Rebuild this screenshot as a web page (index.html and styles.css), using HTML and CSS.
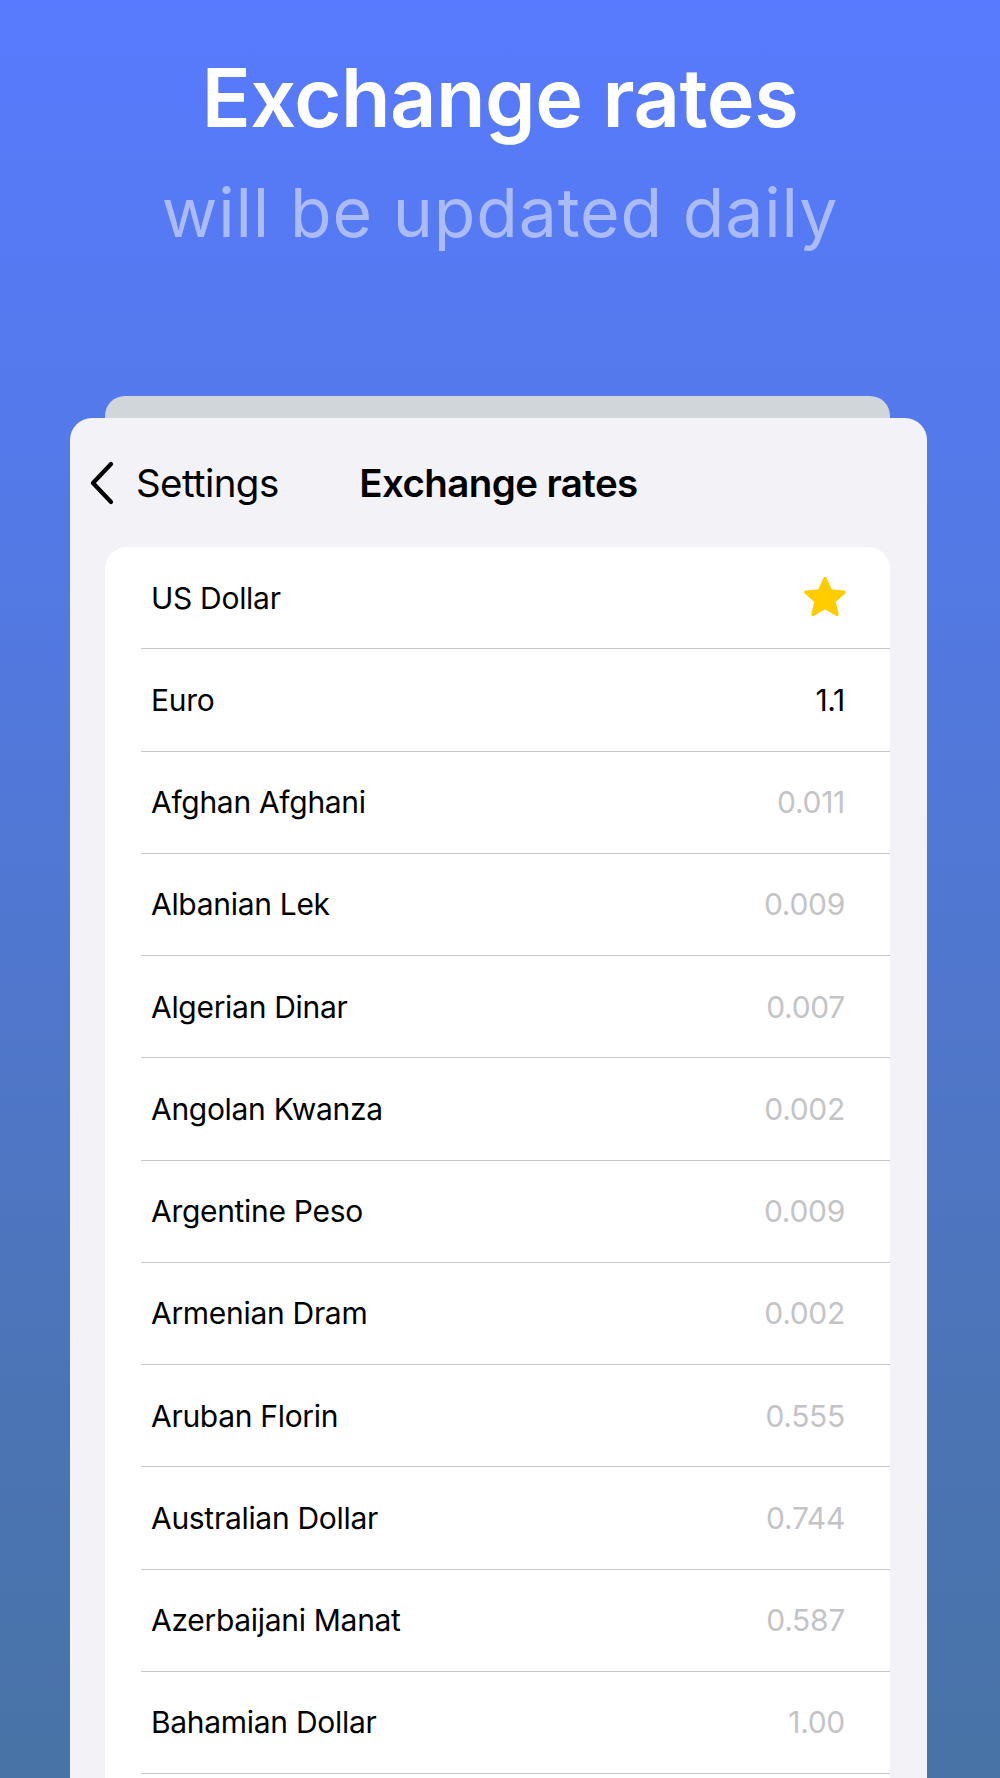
FILE: index.html
```html
<!DOCTYPE html>
<html lang="en">

<head>
  <meta charset="UTF-8">
  <meta name="viewport" content="width=device-width, initial-scale=1.0">
  <title>Exchange rates</title>
  <link rel="stylesheet" href="styles.css">
</head>

<body>
  <header class="hero">
    <h1 class="hero-title">Exchange rates</h1>
    <p class="hero-sub">will be updated daily</p>
  </header>

  <div class="back-card"></div>
  <main class="card">
    <nav class="nav">
      <a class="nav-back">
        <svg class="chevron" viewBox="0 0 26 44" width="26" height="44">
          <path d="M22 3 L4 22 L22 41" fill="none" stroke="#000" stroke-width="4.2" stroke-linecap="round" stroke-linejoin="round" />
        </svg>
        <span>Settings</span>
      </a>
      <span class="nav-title">Exchange rates</span>
      <span></span>
    </nav>

    <ul class="list">
      <li class="row">
        <span class="name">US Dollar</span>
        <svg class="star" viewBox="0 0 24 24" width="50" height="50">
          <path d="M12 2.6 L14.7 8.6 L21.2 9.2 L16.3 13.5 L17.8 19.9 L12 16.5 L6.2 19.9 L7.7 13.5 L2.8 9.2 L9.3 8.6 Z" fill="#ffcc00" stroke="#ffcc00" stroke-width="1.6" stroke-linejoin="round" />
        </svg>
      </li>
      <li class="row"><span class="name">Euro</span><span class="rate main">1.1</span></li>
      <li class="row"><span class="name">Afghan Afghani</span><span class="rate">0.011</span></li>
      <li class="row"><span class="name">Albanian Lek</span><span class="rate">0.009</span></li>
      <li class="row"><span class="name">Algerian Dinar</span><span class="rate">0.007</span></li>
      <li class="row"><span class="name">Angolan Kwanza</span><span class="rate">0.002</span></li>
      <li class="row"><span class="name">Argentine Peso</span><span class="rate">0.009</span></li>
      <li class="row"><span class="name">Armenian Dram</span><span class="rate">0.002</span></li>
      <li class="row"><span class="name">Aruban Florin</span><span class="rate">0.555</span></li>
      <li class="row"><span class="name">Australian Dollar</span><span class="rate">0.744</span></li>
      <li class="row"><span class="name">Azerbaijani Manat</span><span class="rate">0.587</span></li>
      <li class="row"><span class="name">Bahamian Dollar</span><span class="rate">1.00</span></li>
    </ul>
  </main>
</body>

</html>
```

FILE: styles.css
```css
html,
body {
  margin: 0;
  padding: 0;
}

body {
  width: 1000px;
  height: 1778px;
  overflow: hidden;
  font-family: Inter, "Liberation Sans", sans-serif;
  background: linear-gradient(180deg, #587afe 0%, #5379e6 30%, #5077cd 55%, #4b74b4 80%, #4873a6 100%);
}

.hero {
  text-align: center;
  padding-top: 50px;
}

.hero-title {
  margin: 0;
  font-size: 81px;
  line-height: 97px;
  font-weight: 600;
  color: #fff;
  letter-spacing: -0.5px;
}

.hero-sub {
  margin: 25px 0 0;
  font-size: 68px;
  line-height: 80px;
  font-weight: 400;
  color: #abbbf7;
  letter-spacing: 0.8px;
}

.back-card {
  margin: 0 110px 0 105px;
  height: 40px;
  margin-top: 144px;
  margin-bottom: -18px;
  background: #d1d6da;
  border-radius: 20px 20px 0 0;
}

.card {
  margin-left: 70px;
  width: 857px;
  height: 1500px;
  background: #f2f2f7;
  border-radius: 22px 22px 0 0;
  padding: 0 37px 0 35px;
  box-sizing: border-box;
}

.nav {
  display: grid;
  grid-template-columns: 1fr auto 1fr;
  align-items: center;
  height: 129px;
  margin: 0 -37px 0 -35px;
  padding: 0 19px;
}

.nav-back {
  display: flex;
  align-items: center;
  gap: 21px;
  font-size: 38.5px;
  letter-spacing: -0.6px;
  color: #000;
}

.chevron {
  display: block;
}

.nav-title {
  font-size: 38.5px;
  font-weight: 600;
  letter-spacing: -0.6px;
  color: #000;
}

.list {
  list-style: none;
  margin: 0;
  padding: 0 0 60px;
  background: #fff;
  border-radius: 22px;
  overflow: hidden;
}

.row {
  display: flex;
  align-items: center;
  justify-content: space-between;
  height: 101.25px;
  margin-left: 36px;
  padding: 0 45px 0 10px;
  border-bottom: 1px solid #c8c8cc;
  font-size: 30px;
  letter-spacing: -0.3px;
  color: #000;
}

.rate {
  color: #c4c4c7;
}

.rate.main {
  color: #000;
}

.star {
  display: block;
  margin-right: -5px;
}
```
